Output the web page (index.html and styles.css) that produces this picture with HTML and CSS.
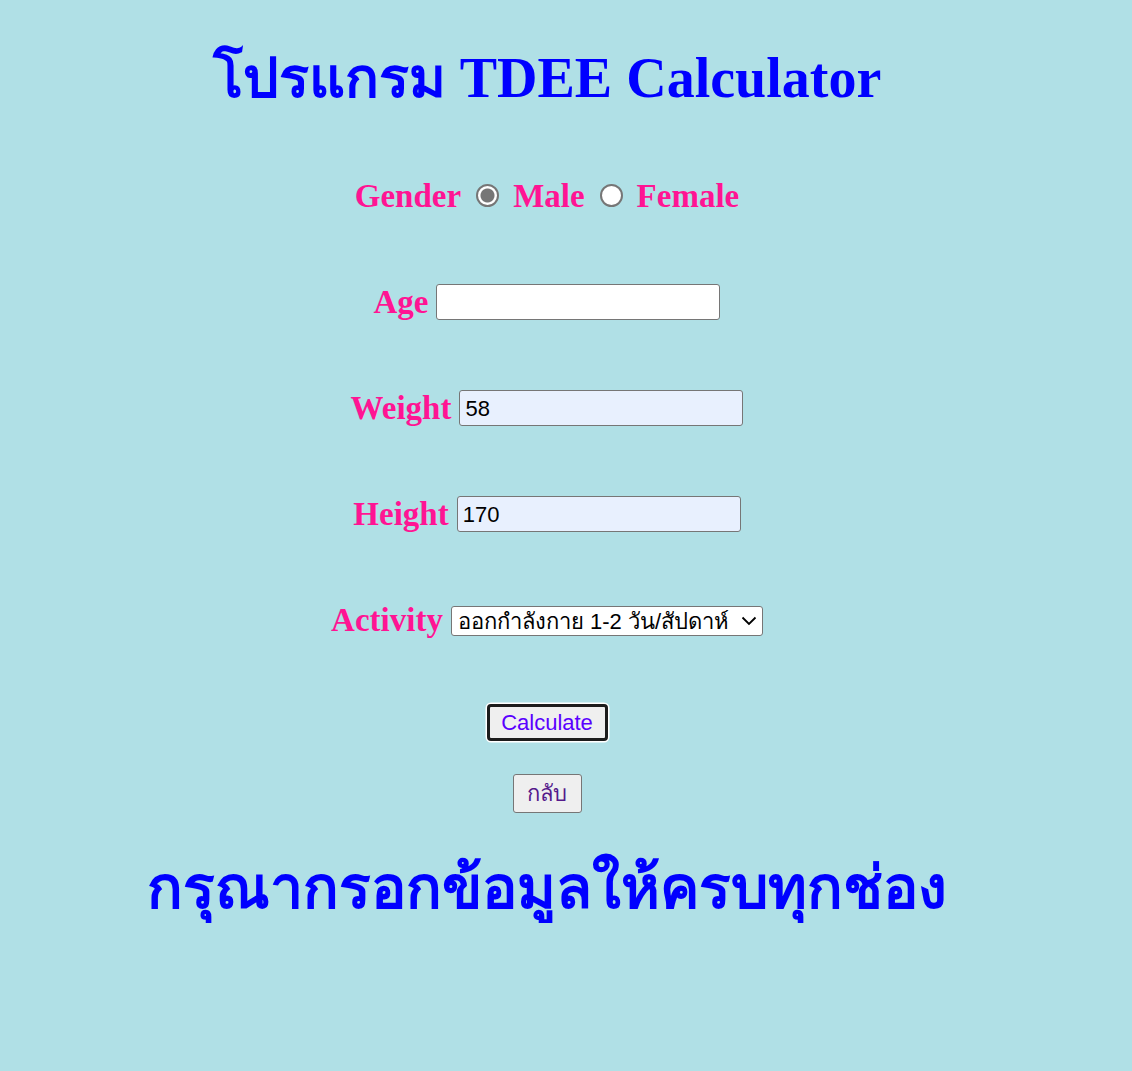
FILE: index.html
```html
<!DOCTYPE html>
<html lang="th">
<head>
<meta charset="utf-8">
<title>TDEE Calculator</title>
<link rel="stylesheet" href="styles.css">
</head>
<body>
<div class="page">
  <h1 class="title">โปรแกรม TDEE Calculator</h1>
  <form class="form">
    <div class="row">
      <span class="label">Gender</span>
      <input class="radio" type="radio" name="g" checked>
      <span class="label">Male</span>
      <input class="radio" type="radio" name="g">
      <span class="label">Female</span>
    </div>
    <div class="row">
      <span class="label">Age</span>
      <input class="field" type="text" value="">
    </div>
    <div class="row">
      <span class="label">Weight</span>
      <input class="field filled" type="text" value="58">
    </div>
    <div class="row">
      <span class="label">Height</span>
      <input class="field filled" type="text" value="170">
    </div>
    <div class="row">
      <span class="label">Activity</span>
      <select class="select">
        <option>ออกกำลังกาย 1-2 วัน/สัปดาห์</option>
      </select>
    </div>
    <div class="btn-row">
      <button class="calc" type="button">Calculate</button>
    </div>
    <div class="btn-row">
      <button class="back" type="button">กลับ</button>
    </div>
  </form>
  <h1 class="message">กรุณากรอกข้อมูลให้ครบทุกช่อง</h1>
</div>
</body>
</html>
```
FILE: styles.css
```css
html, body {
  background: #b0e0e6;
}
body {
  margin: 8px;
  font-family: "Liberation Serif", "Noto Sans CJK SC", serif;
}
.page {
  width: 1078px;
  text-align: center;
}
.title {
  margin: 40px 0 0;
  font-size: 56px;
  line-height: 60px;
  font-weight: bold;
  color: #0000ff;
}
.form {
  margin-top: 70px;
}
.row {
  display: flex;
  justify-content: center;
  gap: 8px;
  height: 106px;
  align-items: flex-start;
}
.label {
  font-size: 33px;
  font-weight: bold;
  color: #ff1493;
  line-height: 37px;
}
.radio {
  appearance: none;
  -webkit-appearance: none;
  width: 23px;
  height: 23px;
  margin: 6px 6px 0 7px;
  border: 2px solid #767676;
  border-radius: 50%;
  background: #fff;
  box-sizing: border-box;
}
.radio:checked {
  background: radial-gradient(circle, #767676 0 6.5px, #fff 7.5px);
}
.field {
  width: 284px;
  height: 36px;
  box-sizing: border-box;
  margin: 0;
  padding: 2px 5px 0;
  border: 1px solid #767676;
  border-radius: 3px;
  background: #fff;
  font-family: "Liberation Sans", Arial, sans-serif;
  font-size: 22px;
  color: #000;
}
.field.filled {
  background: #e8f0fe;
}
.select {
  appearance: none;
  -webkit-appearance: none;
  width: 312px;
  height: 30px;
  box-sizing: border-box;
  margin: 4px 0 0;
  padding: 0 26px 0 6px;
  border: 1px solid #767676;
  border-radius: 3px;
  background-color: #fff;
  background-image: url("data:image/svg+xml;utf8,<svg xmlns='http://www.w3.org/2000/svg' width='16' height='10' viewBox='0 0 16 10'><path d='M1.5 1.5 L8 8 L14.5 1.5' fill='none' stroke='black' stroke-width='1.8'/></svg>");
  background-repeat: no-repeat;
  background-position: right 5px center;
  background-size: 16px 10px;
  font-family: "Liberation Sans", Arial, sans-serif;
  font-size: 22px;
  color: #000;
}
.btn-row {
  display: flex;
  justify-content: center;
}
.calc {
  width: 121px;
  height: 37px;
  margin-top: -4px;
  border: 3px solid #1c1c1c;
  border-radius: 4px;
  box-shadow: 0 0 0 1.5px #fff;
  background: #efefef;
  font-family: "Liberation Sans", Arial, sans-serif;
  font-size: 22px;
  color: #5a00ff;
  padding: 0;
}
.back {
  width: 69px;
  height: 39px;
  margin-top: 33px;
  border: 1px solid #767676;
  border-radius: 3px;
  background: #efefef;
  font-family: "Liberation Sans", Arial, sans-serif;
  font-size: 22px;
  color: #551a8b;
  padding: 0;
}
.message {
  margin: 40px 0 0;
  font-size: 59px;
  line-height: 70px;
  font-weight: bold;
  color: #0000ff;
}
```
